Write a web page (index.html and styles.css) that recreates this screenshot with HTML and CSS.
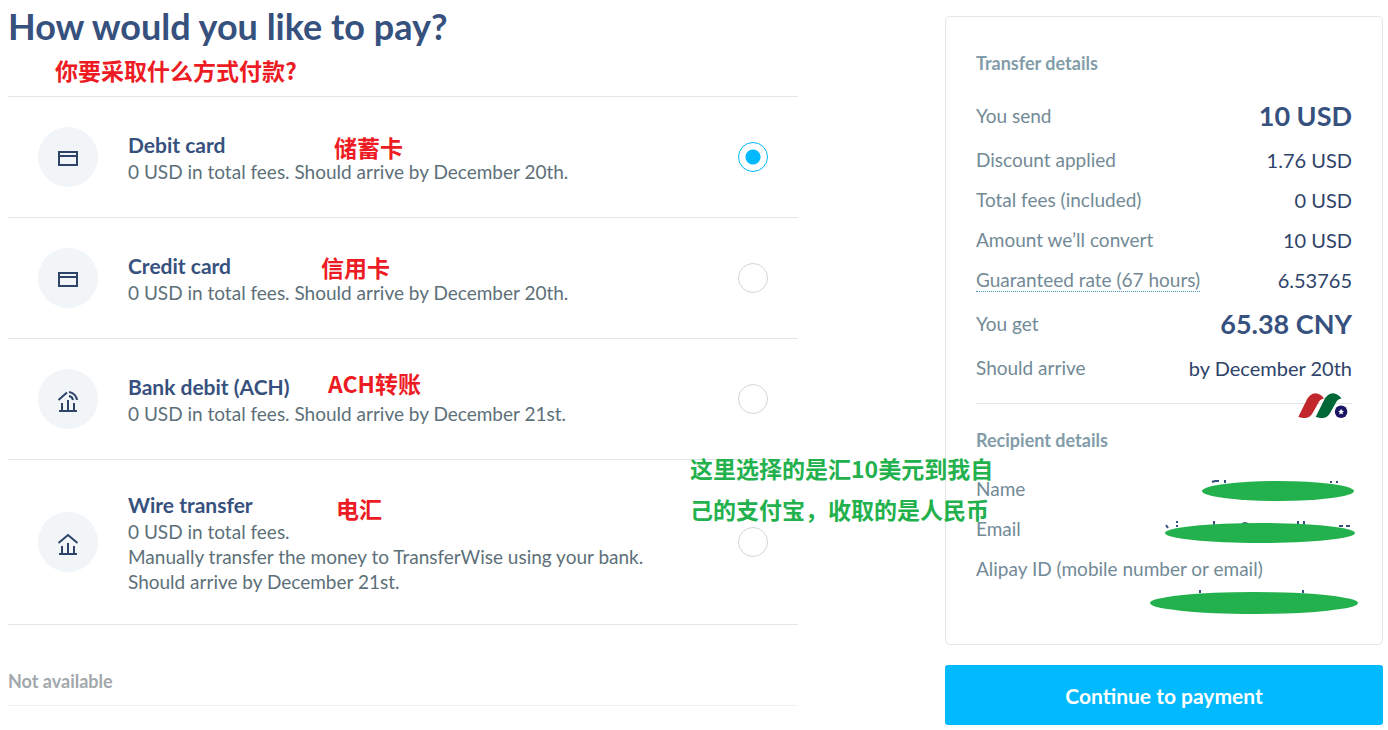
FILE: index.html
```
<!DOCTYPE html>
<html lang="en">

<head>
    <meta charset="UTF-8">
    <meta name="viewport" content="width=device-width, initial-scale=1.0">
    <title>How would you like to pay?</title>
    <link rel="stylesheet" href="styles.css">
</head>

<body>
    <form class="page">
        <!-- Payment methods -->
        <main class="methods">
            <h1>How would you like to pay?</h1>
            <p class="note title-note" lang="zh">你要采取什么方式付款?</p>

            <div class="method-list">
                <div class="method">
                    <svg class="method-icon" viewBox="0 0 60 60" aria-hidden="true">
                        <path d="M21 25H39V38H21Z M21 29H39" />
                    </svg>
                    <label class="method-text" for="debit">
                        <strong>Debit card</strong>
                        <span>0 USD in total fees. Should arrive by December 20th.</span>
                    </label>
                    <input type="radio" name="method" id="debit" checked>
                    <span class="note over debit-note" lang="zh">储蓄卡</span>
                </div>
                <div class="method">
                    <svg class="method-icon" viewBox="0 0 60 60" aria-hidden="true">
                        <path d="M21 25H39V38H21Z M21 29H39" />
                    </svg>
                    <label class="method-text" for="credit">
                        <strong>Credit card</strong>
                        <span>0 USD in total fees. Should arrive by December 20th.</span>
                    </label>
                    <input type="radio" name="method" id="credit">
                    <span class="note over credit-note" lang="zh">信用卡</span>
                </div>
                <div class="method">
                    <svg class="method-icon" viewBox="0 0 60 60" aria-hidden="true">
                        <path d="M20.5 31L29 23.5 M31 23A9 9 0 0 1 39 31 M31 27A5 5 0 0 1 35 31 M24 34V42 M30 31V42 M36 34V42 M21 42H39" />
                    </svg>
                    <label class="method-text" for="ach">
                        <strong>Bank debit (ACH)</strong>
                        <span>0 USD in total fees. Should arrive by December 21st.</span>
                    </label>
                    <input type="radio" name="method" id="ach">
                    <span class="note over ach-note" lang="zh">ACH转账</span>
                </div>
                <div class="method">
                    <svg class="method-icon" viewBox="0 0 60 60" aria-hidden="true">
                        <path d="M20.5 31L30 23L39.5 31 M24 34V42 M30 31V42 M36 34V42 M21 42H39" />
                    </svg>
                    <label class="method-text" for="wire">
                        <strong>Wire transfer</strong>
                        <span>0 USD in total fees.</span>
                        <span>Manually transfer the money to TransferWise using your bank.</span>
                        <span>Should arrive by December 21st.</span>
                    </label>
                    <input type="radio" name="method" id="wire">
                    <span class="note over wire-note" lang="zh">电汇</span>
                    <span class="note over alipay-note" lang="zh">这里选择的是汇10美元到我自<br>己的支付宝，收取的是人民币</span>
                </div>
            </div>

            <h2 class="unavailable">Not available</h2>
        </main>

        <!-- Summary -->
        <aside class="summary">
            <div class="card">
                <h2>Transfer details</h2>
                <dl>
                    <div class="row big"><dt>You send</dt><dd>10 USD</dd></div>
                    <div class="row"><dt>Discount applied</dt><dd>1.76 USD</dd></div>
                    <div class="row"><dt>Total fees (included)</dt><dd>0 USD</dd></div>
                    <div class="row"><dt>Amount we’ll convert</dt><dd>10 USD</dd></div>
                    <div class="row"><dt><span class="hint">Guaranteed rate (67 hours)</span></dt><dd>6.53765</dd></div>
                    <div class="row big"><dt>You get</dt><dd>65.38 CNY</dd></div>
                    <div class="row"><dt>Should arrive</dt><dd>by December 20th</dd></div>
                </dl>

                <div class="divider">
                    <svg class="logo" viewBox="504 38 150 76" aria-hidden="true">
                        <path fill="#c1272d" d="M504 110L528 62Q539 39 556 39Q572 40 582 55Q571 56 565 68L548 98Q538 116 519 114Q508 113 504 110Z" />
                        <path fill="#006837" d="M557 110L581 62Q592 39 609 39Q625 40 635 55Q624 56 618 68L601 98Q591 116 572 114Q561 113 557 110Z" />
                        <circle fill="#1b1464" cx="634" cy="95" r="19" />
                        <path fill="#fff" d="M634 86L637 92L643 93L638 97L640 103L634 100L628 103L630 97L625 93L631 92Z" />
                    </svg>
                </div>

                <h2>Recipient details</h2>
                <dl>
                    <div class="row">
                        <dt>Name</dt>
                        <dd class="hidden-value">
                            <svg class="mark name-mark" viewBox="0 0 152 22" aria-hidden="true">
                                <path d="M10 3L13 2H17M23 1V4M129 2V4M135 2V4" />
                                <ellipse cx="76" cy="12" rx="76" ry="10" />
                            </svg>
                        </dd>
                    </div>
                    <div class="row">
                        <dt>Email</dt>
                        <dd class="hidden-value">
                            <svg class="mark email-mark" viewBox="0 0 190 22" aria-hidden="true">
                                <path d="M1 4L3 7M12 0V2M12 4V6M49 0V4M77 3L80 2L83 3M133 0V4M139 0V4M174 5H178M181 5H185" />
                                <ellipse cx="95" cy="12" rx="95" ry="10" />
                            </svg>
                        </dd>
                    </div>
                    <div class="row"><dt>Alipay ID (mobile number or email)</dt></div>
                    <div class="row last">
                        <dd class="hidden-value">
                            <svg class="mark alipay-mark" viewBox="0 0 208 24" aria-hidden="true">
                                <path d="M50 0V3M153 0V3" />
                                <ellipse cx="104" cy="13" rx="104" ry="11" />
                            </svg>
                        </dd>
                    </div>
                </dl>
            </div>
            <button type="submit" class="continue">Continue to payment</button>
        </aside>
    </form>
</body>

</html>
```
FILE: styles.css
```
* {
    margin: 0;
    padding: 0;
    box-sizing: border-box;
}

body {
    background: #fff;
    color: #5d7079;
    font-family: Lato, "Noto Sans CJK SC", sans-serif;
    font-size: 19px;
    line-height: 25px;
}

.page {
    display: grid;
    grid-template-columns: 1fr 438px;
    gap: 147px;
    align-items: start;
    padding: 8px 5px 0 8px;
}

h1 {
    color: #37517e;
    font-size: 36px;
    line-height: 36px;
}

.note {
    color: #ed1c24;
    font-family: "Noto Sans CJK SC", sans-serif;
    font-size: 23px;
    font-weight: bold;
    line-height: 32px;
    white-space: nowrap;
}

.title-note {
    margin: 10px 0 10px 47px;
}

.method-list {
    border-top: 1px solid #e2e6e8;
}

.method {
    position: relative;
    display: flex;
    align-items: center;
    gap: 30px;
    padding: 30px;
    border-bottom: 1px solid #e2e6e8;
}

.method-icon {
    flex: none;
    width: 60px;
    height: 60px;
    border-radius: 50%;
    background: #f1f5f8;
    fill: none;
    stroke: #2e4369;
    stroke-width: 2;
}

.method-text {
    flex: 1;
    cursor: pointer;
}

.method-text span,
.method-text strong {
    display: block;
}

.method-text strong {
    color: #37517e;
    font-size: 21px;
    line-height: 29px;
}

.method input {
    appearance: none;
    flex: none;
    width: 30px;
    height: 30px;
    border: 1px solid #d3d5d8;
    border-radius: 50%;
    background: #fff;
    cursor: pointer;
}

.method input:checked {
    border-color: #00b9ff;
    background: radial-gradient(circle, #00b9ff 7px, #fff 8px);
}

/* translations written over the page */
.over {
    position: absolute;
}

.debit-note {
    left: 326px;
    top: 34px;
}

.credit-note {
    left: 313px;
    top: 33px;
}

.ach-note {
    left: 320px;
    top: 28px;
}

.wire-note {
    left: 328px;
    top: 32px;
}

.alipay-note {
    left: 682px;
    top: -12px;
    z-index: 1;
    color: #22b14c;
    line-height: 41px;
}

.unavailable {
    margin-top: 44px;
    padding-bottom: 12px;
    border-bottom: 1px solid #f0f2f3;
    color: #a2a8ab;
    font-size: 18px;
    line-height: 24px;
}

.summary {
    padding-top: 8px;
}

.card {
    padding: 30px;
    border: 1px solid #e2e6e8;
    border-radius: 5px;
}

.card h2 {
    margin-bottom: 13px;
    color: #829ca9;
    font-size: 18px;
    line-height: 32px;
}

.row {
    display: flex;
    justify-content: space-between;
    line-height: 40px;
    white-space: nowrap;
}

.row dt {
    color: #728a96;
}

.row dd {
    color: #2e4369;
    font-size: 20px;
}

.big {
    line-height: 48px;
}

.big dd {
    color: #37517e;
    font-size: 27px;
    font-weight: bold;
}

.hint {
    border-bottom: 1px dotted #4095b8;
}

.divider {
    position: relative;
    margin: 15px 0 20px;
    border-top: 1px solid #e2e6e8;
}

.logo {
    position: absolute;
    right: 4px;
    top: -11px;
    width: 50px;
    height: 25px;
}

.hidden-value {
    position: relative;
}

.last {
    justify-content: flex-end;
    height: 25px;
}

/* scribbles that cover private values */
.mark {
    position: absolute;
    fill: #22b14c;
    stroke: none;
}

.mark path {
    fill: none;
    stroke: #37517e;
    stroke-width: 2;
}

.name-mark {
    right: -2px;
    top: 10px;
    width: 152px;
}

.email-mark {
    right: -3px;
    top: 12px;
    width: 190px;
}

.alipay-mark {
    right: -6px;
    top: 1px;
    width: 208px;
}

.continue {
    width: 100%;
    height: 60px;
    margin-top: 20px;
    border: none;
    border-radius: 3px;
    background: #00b9ff;
    color: #fff;
    font-family: inherit;
    font-size: 21px;
    font-weight: bold;
    cursor: pointer;
}
```
